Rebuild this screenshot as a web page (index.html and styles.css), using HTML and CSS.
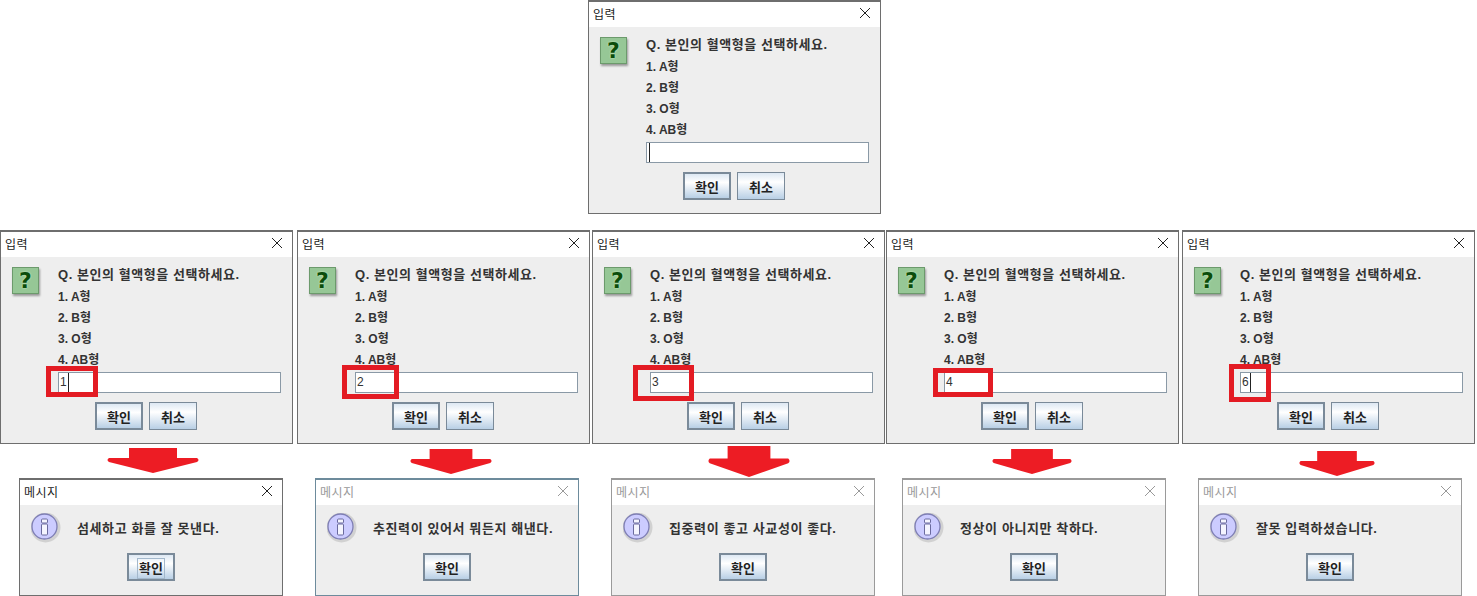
FILE: index.html
```html
<!DOCTYPE html>
<html lang="ko">
<head>
    <meta charset="UTF-8">
    <title>입력 대화상자</title>
    <link rel="stylesheet" href="styles.css">
</head>
<body>

<svg class="sprites" width="0" height="0">
    <symbol id="icon-close" viewBox="0 0 12 12">
        <path d="M1 1 L11 11 M11 1 L1 11" fill="none" stroke="currentColor" stroke-width="1"/>
    </symbol>
    <symbol id="icon-info" viewBox="0 0 30 30">
        <circle cx="14.5" cy="14.5" r="15" fill="#000" opacity="0.12"/>
        <circle cx="13.5" cy="13.5" r="12.5" fill="#ccccff" stroke="#7e7eb4" stroke-width="1.3"/>
        <rect x="10.5" y="6" width="6" height="4" rx="1" fill="#f4f4ff" stroke="#6a6a9e" stroke-width="1"/>
        <rect x="10.5" y="11" width="6" height="11" rx="1" fill="#f4f4ff" stroke="#6a6a9e" stroke-width="1"/>
    </symbol>
    <symbol id="icon-arrow" viewBox="0 0 92 25" preserveAspectRatio="none">
        <path d="M22 0 H70 V10 H90 Q93 12 90 14 L46 25 L2 14 Q-1 12 2 10 H22 Z" fill="#ed1c24"/>
    </symbol>
</svg>

<!-- top dialog -->
<div class="dialog ask ask-top">
    <div class="titlebar"><span>입력</span><svg class="close"><use href="#icon-close"/></svg></div>
    <div class="question-icon">?</div>
    <div class="lines">
        <p>Q. 본인의 혈액형을 선택하세요.</p>
        <p>1. A형</p>
        <p>2. B형</p>
        <p>3. O형</p>
        <p>4. AB형</p>
    </div>
    <div class="field"><span class="caret"></span></div>
    <div class="buttons">
        <button class="btn default">확인</button>
        <button class="btn">취소</button>
    </div>
</div>

<!-- row of answers -->
<div class="dialog ask ask-1">
    <div class="titlebar"><span>입력</span><svg class="close"><use href="#icon-close"/></svg></div>
    <div class="question-icon">?</div>
    <div class="lines">
        <p>Q. 본인의 혈액형을 선택하세요.</p>
        <p>1. A형</p>
        <p>2. B형</p>
        <p>3. O형</p>
        <p>4. AB형</p>
    </div>
    <div class="field">1<span class="caret"></span></div>
    <div class="buttons">
        <button class="btn default">확인</button>
        <button class="btn">취소</button>
    </div>
</div>

<div class="dialog ask ask-2">
    <div class="titlebar"><span>입력</span><svg class="close"><use href="#icon-close"/></svg></div>
    <div class="question-icon">?</div>
    <div class="lines">
        <p>Q. 본인의 혈액형을 선택하세요.</p>
        <p>1. A형</p>
        <p>2. B형</p>
        <p>3. O형</p>
        <p>4. AB형</p>
    </div>
    <div class="field">2</div>
    <div class="buttons">
        <button class="btn default">확인</button>
        <button class="btn">취소</button>
    </div>
</div>

<div class="dialog ask ask-3">
    <div class="titlebar"><span>입력</span><svg class="close"><use href="#icon-close"/></svg></div>
    <div class="question-icon">?</div>
    <div class="lines">
        <p>Q. 본인의 혈액형을 선택하세요.</p>
        <p>1. A형</p>
        <p>2. B형</p>
        <p>3. O형</p>
        <p>4. AB형</p>
    </div>
    <div class="field">3</div>
    <div class="buttons">
        <button class="btn default">확인</button>
        <button class="btn">취소</button>
    </div>
</div>

<div class="dialog ask ask-4">
    <div class="titlebar"><span>입력</span><svg class="close"><use href="#icon-close"/></svg></div>
    <div class="question-icon">?</div>
    <div class="lines">
        <p>Q. 본인의 혈액형을 선택하세요.</p>
        <p>1. A형</p>
        <p>2. B형</p>
        <p>3. O형</p>
        <p>4. AB형</p>
    </div>
    <div class="field">4</div>
    <div class="buttons">
        <button class="btn default">확인</button>
        <button class="btn">취소</button>
    </div>
</div>

<div class="dialog ask ask-5">
    <div class="titlebar"><span>입력</span><svg class="close"><use href="#icon-close"/></svg></div>
    <div class="question-icon">?</div>
    <div class="lines">
        <p>Q. 본인의 혈액형을 선택하세요.</p>
        <p>1. A형</p>
        <p>2. B형</p>
        <p>3. O형</p>
        <p>4. AB형</p>
    </div>
    <div class="field">6<span class="caret"></span></div>
    <div class="buttons">
        <button class="btn default">확인</button>
        <button class="btn">취소</button>
    </div>
</div>

<!-- red boxes round the typed value -->
<div class="mark mark-1"></div>
<div class="mark mark-2"></div>
<div class="mark mark-3"></div>
<div class="mark mark-4"></div>
<div class="mark mark-5"></div>

<!-- arrows -->
<svg class="arrow arrow-1"><use href="#icon-arrow"/></svg>
<svg class="arrow arrow-2"><use href="#icon-arrow"/></svg>
<svg class="arrow arrow-3"><use href="#icon-arrow"/></svg>
<svg class="arrow arrow-4"><use href="#icon-arrow"/></svg>
<svg class="arrow arrow-5"><use href="#icon-arrow"/></svg>

<!-- result messages -->
<div class="dialog msg msg-1">
    <div class="titlebar"><span>메시지</span><svg class="close"><use href="#icon-close"/></svg></div>
    <svg class="info-icon"><use href="#icon-info"/></svg>
    <p class="msg-text">섬세하고 화를 잘 못낸다.</p>
    <button class="btn default focused"><span>확인</span></button>
</div>

<div class="dialog msg inactive msg-2">
    <div class="titlebar"><span>메시지</span><svg class="close"><use href="#icon-close"/></svg></div>
    <svg class="info-icon"><use href="#icon-info"/></svg>
    <p class="msg-text">추진력이 있어서 뭐든지 해낸다.</p>
    <button class="btn default">확인</button>
</div>

<div class="dialog msg inactive msg-3">
    <div class="titlebar"><span>메시지</span><svg class="close"><use href="#icon-close"/></svg></div>
    <svg class="info-icon"><use href="#icon-info"/></svg>
    <p class="msg-text">집중력이 좋고 사교성이 좋다.</p>
    <button class="btn default">확인</button>
</div>

<div class="dialog msg inactive msg-4">
    <div class="titlebar"><span>메시지</span><svg class="close"><use href="#icon-close"/></svg></div>
    <svg class="info-icon"><use href="#icon-info"/></svg>
    <p class="msg-text">정상이 아니지만 착하다.</p>
    <button class="btn default">확인</button>
</div>

<div class="dialog msg inactive msg-5">
    <div class="titlebar"><span>메시지</span><svg class="close"><use href="#icon-close"/></svg></div>
    <svg class="info-icon"><use href="#icon-info"/></svg>
    <p class="msg-text">잘못 입력하셨습니다.</p>
    <button class="btn default">확인</button>
</div>

</body>
</html>
```
FILE: styles.css
```css
html, body {
    margin: 0;
    padding: 0;
    height: 596px;
    overflow: hidden;
    background-color: #fff;
}

body {
    position: relative;
    font-family: "Liberation Sans", "Noto Sans CJK KR", sans-serif;
    color: #333;
}

.sprites {
    position: absolute;
}

/* windows sit on a free canvas */
.dialog {
    position: absolute;
    box-sizing: border-box;
    width: 293px;
    background-color: #eee;
    border: 1px solid #6e6e6e;
    border-top-width: 2px;
}

.ask {
    height: 214px;
    display: flex;
    flex-direction: column;
}

.ask-top { left: 588px; top: 0; }
.ask-1 { left: 0; top: 230px; }
.ask-2 { left: 297px; top: 230px; }
.ask-3 { left: 592px; top: 230px; }
.ask-4 { left: 886px; top: 230px; }
.ask-5 { left: 1182px; top: 230px; }

.titlebar {
    height: 25px;
    flex: none;
    box-sizing: border-box;
    background-color: #fff;
    display: flex;
    align-items: center;
    justify-content: space-between;
    padding: 0 9px 3px 4px;
    font-size: 12px;
    letter-spacing: 0.5px;
    color: #222;
}

.close {
    width: 12px;
    height: 12px;
    color: #222;
}

.question-icon {
    position: absolute;
    left: 11px;
    top: 35px;
    box-sizing: border-box;
    width: 27px;
    height: 27px;
    background-color: #96c796;
    border: 1px solid #6c9a6c;
    box-shadow: 1px 2px 2px #999;
    text-align: center;
    font-family: "DejaVu Sans", sans-serif;
    font-size: 22px;
    line-height: 25px;
    font-weight: bold;
    color: #0b4d0b;
    text-shadow: 0 0 2px #d8f5c8;
}

.lines {
    margin: 7px 0 0 57px;
    font-size: 12px;
    font-weight: bold;
    line-height: 21px;
}

.lines p {
    margin: 0;
}

.lines p:first-child {
    font-size: 13px;
    letter-spacing: 0.55px;
    margin-bottom: 2px;
}

.field {
    box-sizing: border-box;
    margin: 1px 0 0 57px;
    width: 223px;
    height: 21px;
    background-color: #fff;
    border: 1px solid #8a99a6;
    padding-left: 1px;
    font-size: 12px;
    line-height: 19px;
    color: #333;
    display: flex;
}

.caret {
    width: 1px;
    height: 19px;
    margin-left: 1px;
    background-color: #222;
}

.buttons {
    display: flex;
    gap: 6px;
    margin: 9px 0 0 94px;
}

.btn {
    box-sizing: border-box;
    width: 48px;
    height: 28px;
    padding: 0;
    border: 1px solid #7a8a99;
    background: linear-gradient(#dde8f3, #fff 35%, #b8cfe5);
    font-family: "Liberation Sans", "Noto Sans CJK KR", sans-serif;
    font-size: 13px;
    font-weight: bold;
    color: #222;
}

.btn.default {
    border-width: 2px;
}

.btn.focused span {
    border: 1px solid #a3b8cc;
    padding: 2px 1px;
}

.msg {
    width: 264px;
    height: 118px;
}

.msg-1 { left: 19px; top: 478px; }
.msg-2 { left: 315px; top: 478px; }
.msg-3 { left: 611px; top: 478px; }
.msg-4 { left: 902px; top: 478px; }
.msg-5 { left: 1198px; top: 478px; }

.inactive {
    border-color: #9a9a9a;
}

.msg-2.inactive {
    border-color: #6d8b9c;
}

.inactive .titlebar,
.inactive .close {
    color: #999;
}

.info-icon {
    position: absolute;
    left: 11px;
    top: 33px;
    width: 30px;
    height: 30px;
}

.msg-text {
    position: absolute;
    left: 57px;
    top: 39px;
    margin: 0;
    font-size: 13px;
    font-weight: bold;
    letter-spacing: 0.6px;
    line-height: 20px;
    white-space: nowrap;
}

.msg .btn {
    position: absolute;
    left: 107px;
    top: 73px;
}

/* red annotations */
.mark {
    position: absolute;
    box-sizing: border-box;
    border: 5px solid #e31b23;
}

.mark-1 { left: 46px; top: 366px; width: 52px; height: 31px; }
.mark-2 { left: 342px; top: 365px; width: 57px; height: 34px; }
.mark-3 { left: 633px; top: 365px; width: 61px; height: 36px; }
.mark-4 { left: 933px; top: 368px; width: 60px; height: 29px; }
.mark-5 { left: 1229px; top: 364px; width: 42px; height: 38px; }

.arrow {
    position: absolute;
    height: 25px;
    width: 92px;
}

.arrow-1 { left: 107px; top: 448px; }
.arrow-2 { left: 410px; top: 449px; width: 82px; }
.arrow-3 { left: 708px; top: 446px; width: 82px; height: 31px; }
.arrow-4 { left: 992px; top: 449px; width: 80px; }
.arrow-5 { left: 1299px; top: 451px; width: 76px; }
```
